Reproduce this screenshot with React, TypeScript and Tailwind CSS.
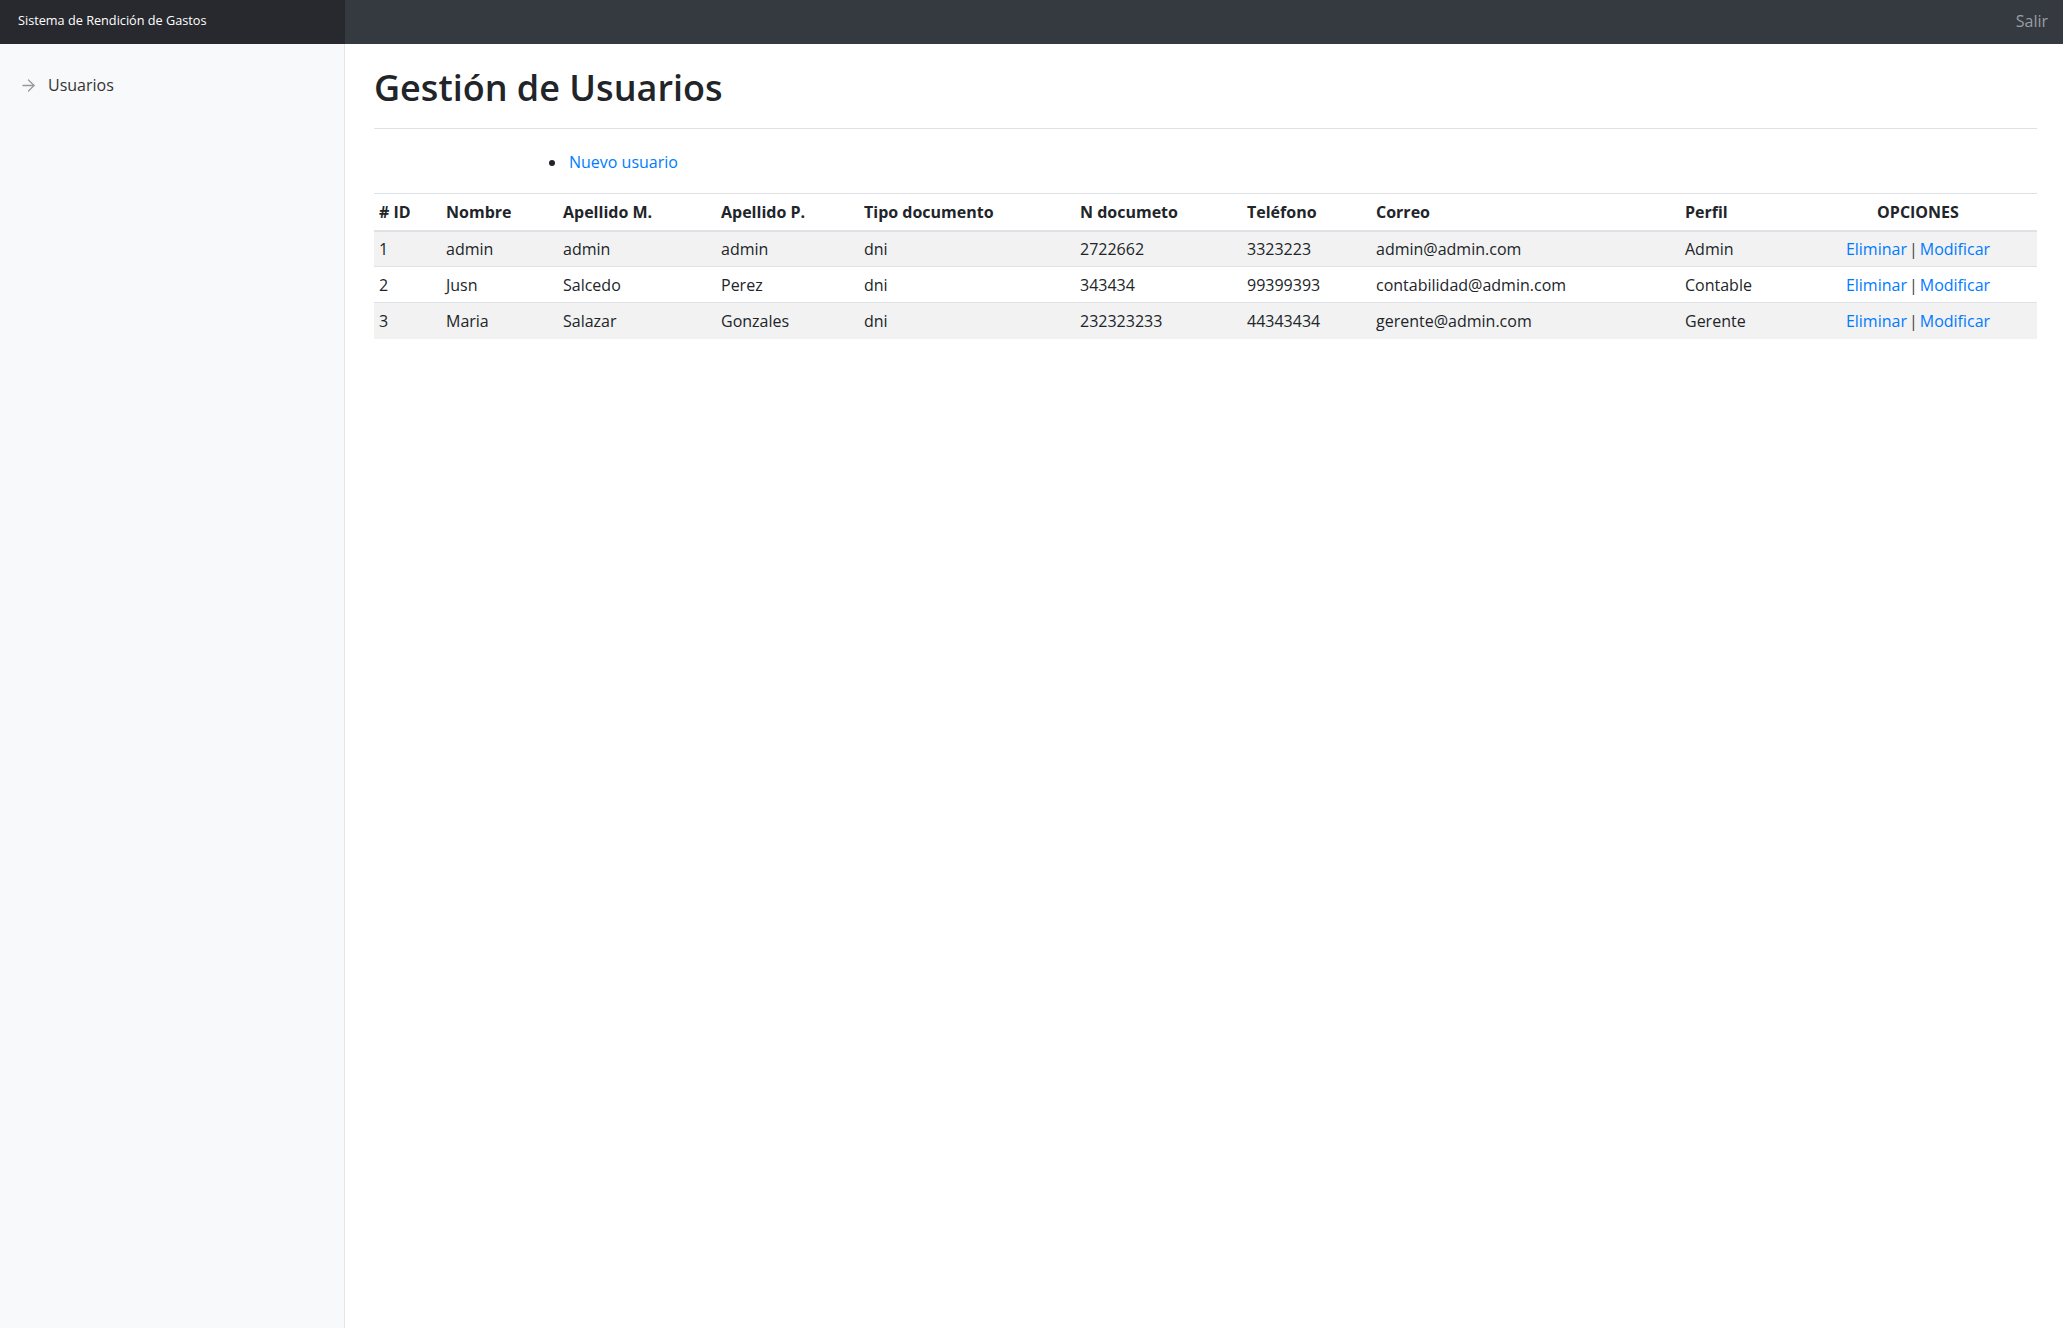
import { useState } from "react";

const usuarios = [
    { id: 1, nombre: "admin", apellidoM: "admin", apellidoP: "admin", tipo: "dni", documento: "2722662", telefono: "3323223", correo: "admin@admin.com", perfil: "Admin" },
    { id: 2, nombre: "Jusn", apellidoM: "Salcedo", apellidoP: "Perez", tipo: "dni", documento: "343434", telefono: "99399393", correo: "contabilidad@admin.com", perfil: "Contable" },
    { id: 3, nombre: "Maria", apellidoM: "Salazar", apellidoP: "Gonzales", tipo: "dni", documento: "232323233", telefono: "44343434", correo: "gerente@admin.com", perfil: "Gerente" },
];

const font = { fontFamily: '"Open Sans", "Noto Sans", sans-serif' };

function ArrowRight() {
    return (
        <svg width="19" height="19" viewBox="0 0 24 24" fill="none" stroke="#999" strokeWidth="1.6" strokeLinecap="round" strokeLinejoin="round">
            <line x1="5" y1="12" x2="19" y2="12" />
            <polyline points="12 5 19 12 12 19" />
        </svg>
    );
}

export default function App() {
    const [activo] = useState("usuarios");

    return (
        <div className="min-h-screen flex flex-col text-[#212529] bg-white font-['Open_Sans','Noto_Sans',sans-serif]" style={font}>
            {/* Navbar */}
            <header className="h-[44px] flex shrink-0 bg-[#343a40]">
                <div className="w-[345px] bg-[#27292e] flex items-center px-[18px] pb-[2px] text-white text-[12.7px]">
                    Sistema de Rendición de Gastos
                </div>
                <div className="flex-1 flex items-center justify-end pr-[15px] pb-[2px]">
                    <a href="#" className="text-[16px] text-[#9a9da1]">Salir</a>
                </div>
            </header>

            <div className="flex flex-1">
                {/* Sidebar */}
                <aside className="w-[345px] shrink-0 bg-[#f8f9fa] border-r border-[#e3e4e5] pt-[30px]">
                    <a href="#" className={`flex items-center gap-[10px] pl-[19px] text-[16px] font-medium ${activo === "usuarios" ? "text-[#333]" : "text-[#333]"}`}>
                        <ArrowRight />
                        <span className="leading-[22px]">Usuarios</span>
                    </a>
                </aside>

                {/* Main */}
                <main className="flex-1 pl-[29px] pr-[26px]">
                    <div className="pt-[16px] pb-[12px] border-b border-[#dee2e6]">
                        <h1 className="text-[36px] font-semibold leading-[56px] text-[#212529]">Gestión de Usuarios</h1>
                    </div>

                    <ul className="list-disc pl-[193px] mt-[21px] mb-[19px] marker:text-[#212529]">
                        <li className="pl-[2px]">
                            <a href="#" className="text-[16px] text-[#007bff] leading-[24px]">Nuevo usuario</a>
                        </li>
                    </ul>

                    <table className="w-full table-fixed border-collapse text-[16px]">
                        <colgroup>
                            <col className="w-[67px]" />
                            <col className="w-[117px]" />
                            <col className="w-[158px]" />
                            <col className="w-[143px]" />
                            <col className="w-[216px]" />
                            <col className="w-[167px]" />
                            <col className="w-[129px]" />
                            <col className="w-[309px]" />
                            <col className="w-[119px]" />
                            <col />
                        </colgroup>
                        <thead>
                            <tr className="h-[37px] border-t border-b-2 border-[#dee2e6]">
                                <th className="text-left px-[5px] font-bold">#&nbsp;ID</th>
                                <th className="text-left px-[5px] font-bold">Nombre</th>
                                <th className="text-left px-[5px] font-bold">Apellido M.</th>
                                <th className="text-left px-[5px] font-bold">Apellido P.</th>
                                <th className="text-left px-[5px] font-bold">Tipo documento</th>
                                <th className="text-left px-[5px] font-bold">N documeto</th>
                                <th className="text-left px-[5px] font-bold">Teléfono</th>
                                <th className="text-left px-[5px] font-bold">Correo</th>
                                <th className="text-left px-[5px] font-bold">Perfil</th>
                                <th className="text-center px-[5px] font-bold">OPCIONES</th>
                            </tr>
                        </thead>
                        <tbody>
                            {usuarios.map((u, i) => (
                                <tr key={u.id} className={`h-[36px] border-t border-[#dee2e6] ${i % 2 === 0 ? "bg-[#f2f2f2]" : "bg-white"}`}>
                                    <td className="px-[5px]">{u.id}</td>
                                    <td className="px-[5px]">{u.nombre}</td>
                                    <td className="px-[5px]">{u.apellidoM}</td>
                                    <td className="px-[5px]">{u.apellidoP}</td>
                                    <td className="px-[5px]">{u.tipo}</td>
                                    <td className="px-[5px]">{u.documento}</td>
                                    <td className="px-[5px]">{u.telefono}</td>
                                    <td className="px-[5px]">{u.correo}</td>
                                    <td className="px-[5px]">{u.perfil}</td>
                                    <td className="px-[5px] text-center">
                                        <a href="#" className="text-[#007bff]">Eliminar</a>
                                        <span className="text-[#444] mx-[2px]">|</span>
                                        <a href="#" className="text-[#007bff]">Modificar</a>
                                    </td>
                                </tr>
                            ))}
                        </tbody>
                    </table>
                </main>
            </div>
        </div>
    );
}
